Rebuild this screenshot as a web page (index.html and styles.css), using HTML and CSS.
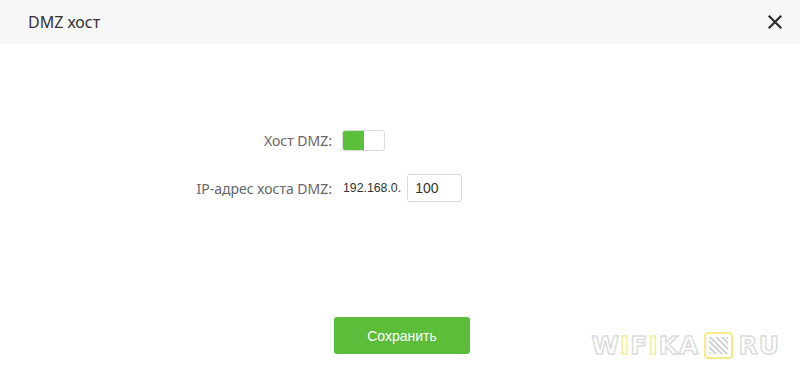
FILE: index.html
```html
<!DOCTYPE html>
<html lang="ru">
<head>
<meta charset="UTF-8" />
<meta name="viewport" content="width=device-width, initial-scale=1.0" />
<title>DMZ хост</title>
<link rel="stylesheet" href="styles.css">
</head>
<body>
<div class="dialog">
<div class="dialog-header">
<h1 class="dialog-title">DMZ хост</h1>
<button class="close-btn" aria-label="Закрыть">
<svg width="14" height="14" viewBox="0 0 14 14"><path d="M1.5 1.5 L12.5 12.5 M12.5 1.5 L1.5 12.5" stroke="#2b2b2b" stroke-width="2.2" stroke-linecap="square"/></svg>
</button>
</div>
<div class="dialog-body">
<div class="form-row">
<label class="form-label">Хост DMZ:</label>
<div class="form-control">
<span class="switch"><span class="switch-on"></span></span>
</div>
</div>
<div class="form-row">
<label class="form-label">IP-адрес хоста DMZ:</label>
<div class="form-control">
<span class="ip-prefix">192.168.0.</span>
<input class="ip-input" type="text" value="100">
</div>
</div>
<div class="actions">
<button class="save-btn">Сохранить</button>
</div>
</div>
<div class="watermark">
<span class="wm-text">W<span class="wm-i">I</span>F<span class="wm-i">I</span>KA</span>
<span class="wm-qr"><span class="wm-dots"></span></span>
<span class="wm-text">RU</span>
</div>
</div>
</body>
</html>
```

FILE: styles.css
```css
* {
margin: 0;
padding: 0;
box-sizing: border-box;
}
body {
width: 100%;
height: 100vh;
background: #fff;
font-family: 'Noto Sans', 'Open Sans', sans-serif;
color: #333;
overflow: hidden;
}
.dialog {
position: relative;
height: 100%;
}
.dialog-header {
height: 44px;
background: #f7f7f7;
display: flex;
align-items: center;
justify-content: space-between;
padding: 0 18px 0 28px;
}
.dialog-title {
font-size: 16px;
font-weight: normal;
color: #333;
}
.close-btn {
border: none;
background: none;
width: 14px;
height: 14px;
display: flex;
cursor: pointer;
}
.dialog-body {
padding-top: 82px;
}
.form-row {
display: flex;
align-items: center;
height: 28px;
margin-bottom: 20px;
}
.form-label {
width: 342px;
padding-right: 10px;
text-align: right;
font-size: 14px;
color: #666;
}
.form-control {
display: flex;
align-items: center;
}
.switch {
display: flex;
width: 43px;
height: 21px;
border: 1px solid #dcdcdc;
border-radius: 3px;
background: #fff;
}
.switch-on {
width: 21px;
height: 100%;
background: #5cbf3a;
border-radius: 2px 0 0 2px;
}
.ip-prefix {
font-size: 12.3px;
color: #333;
margin-left: 1px;
margin-right: 6px;
font-family: 'Liberation Sans', sans-serif;
}
.ip-input {
width: 55px;
height: 28px;
border: 1px solid #d9d9d9;
border-radius: 3px;
padding: 0 7px;
font-size: 14px;
font-family: 'Liberation Sans', sans-serif;
color: #333;
outline: none;
}
.actions {
display: flex;
justify-content: center;
padding-left: 4px;
margin-top: 115px;
}
.save-btn {
width: 136px;
height: 37px;
border: none;
border-radius: 3px;
background: #5cbd3a;
color: #fff;
font-size: 14px;
font-family: 'Liberation Sans', sans-serif;
cursor: pointer;
}
.watermark {
position: absolute;
right: 20px;
bottom: 18px;
display: flex;
align-items: center;
gap: 5px;
opacity: 0.8;
}
.wm-text {
font-family: 'DejaVu Sans', sans-serif;
font-weight: bold;
font-size: 25px;
letter-spacing: 1px;
color: #fff;
-webkit-text-stroke: 1.5px #d4d4d4;
}
.wm-i {
-webkit-text-stroke: 1.5px #f2e68a;
}
.wm-qr {
width: 29px;
height: 27px;
border: 2px solid #f4e66e;
border-radius: 4px;
padding: 3px;
display: flex;
}
.wm-dots {
flex: 1;
background: repeating-linear-gradient(45deg, #ccc 0 2px, #fff 2px 4px);
}
```
